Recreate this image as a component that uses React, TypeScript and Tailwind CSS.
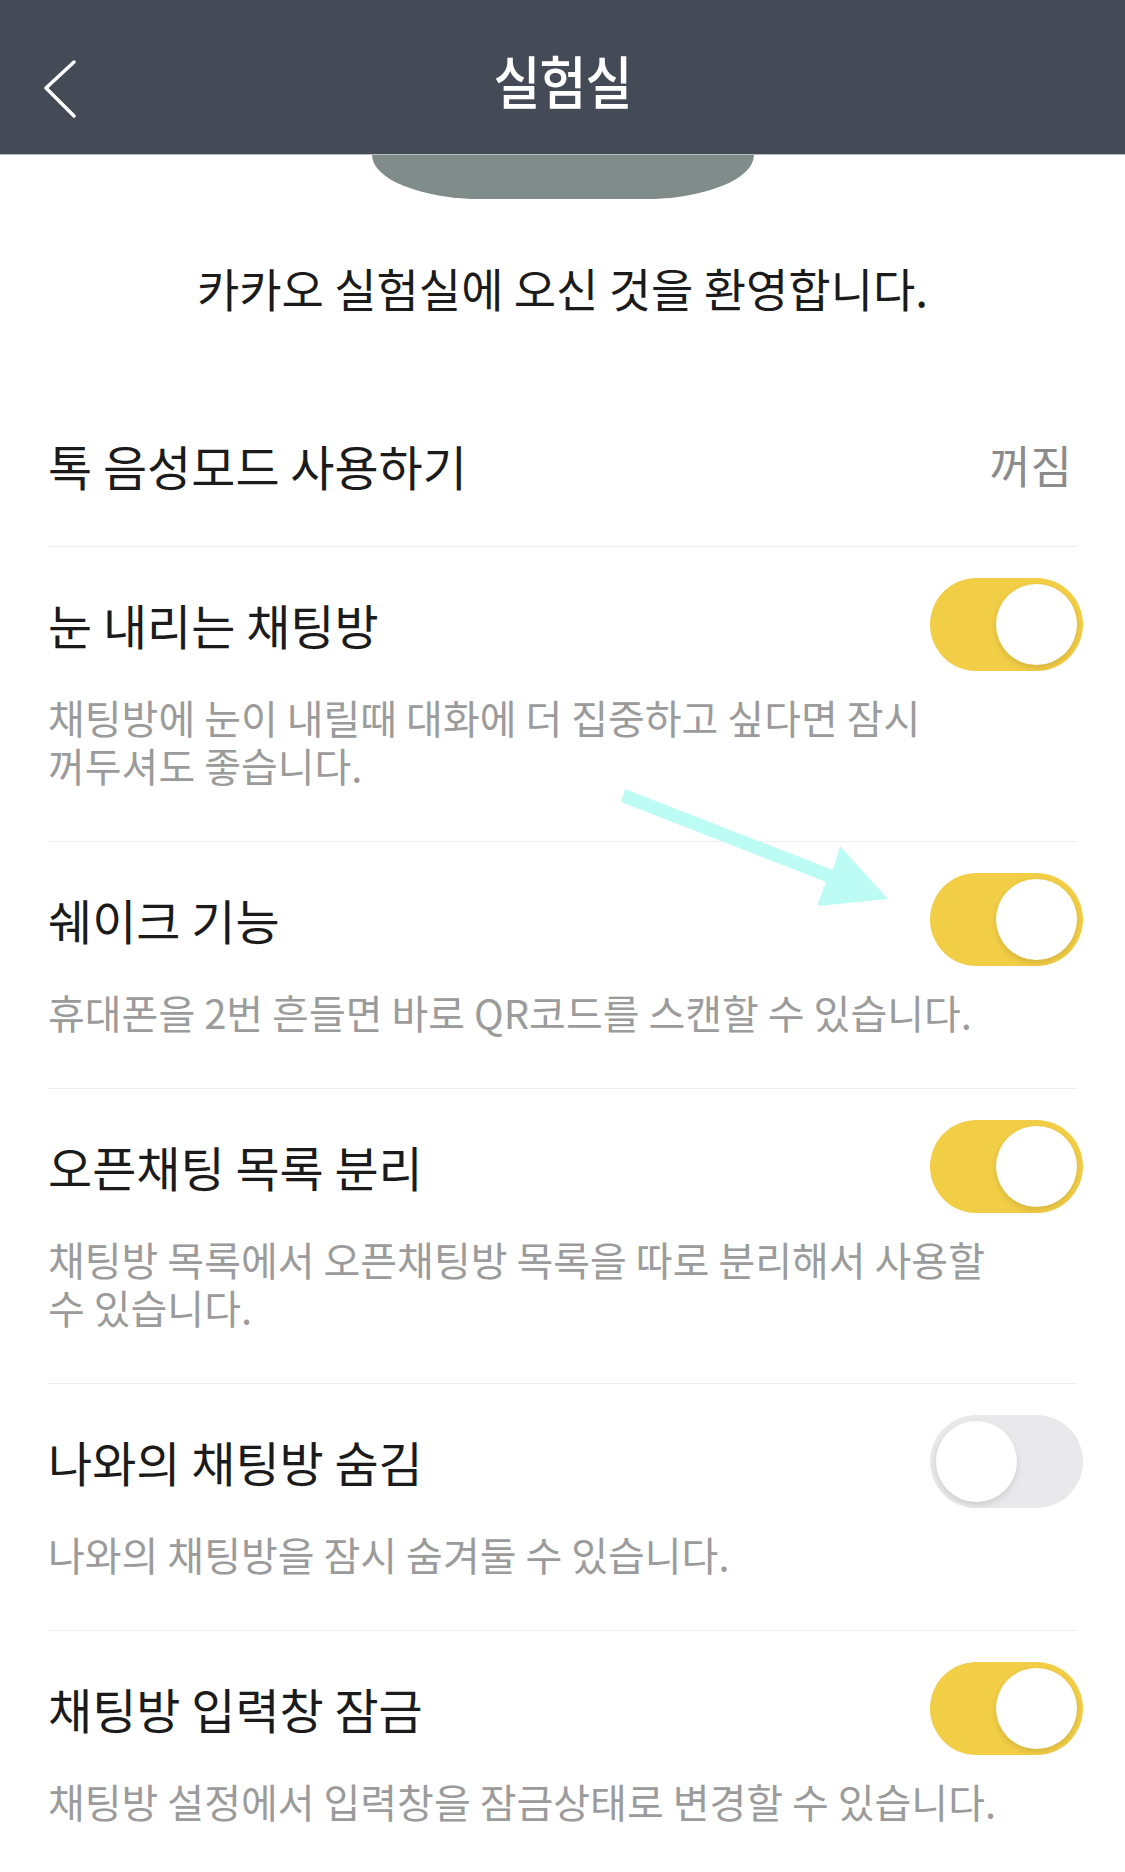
import { Fragment } from 'react'

interface LabRow {
  title: string
  desc?: string[]
  on?: boolean
  value?: string
}

const rows: LabRow[] = [
  { title: '톡 음성모드 사용하기', value: '꺼짐' },
  {
    title: '눈 내리는 채팅방',
    desc: ['채팅방에 눈이 내릴때 대화에 더 집중하고 싶다면 잠시', '꺼두셔도 좋습니다.'],
    on: true,
  },
  { title: '쉐이크 기능', desc: ['휴대폰을 2번 흔들면 바로 QR코드를 스캔할 수 있습니다.'], on: true },
  {
    title: '오픈채팅 목록 분리',
    desc: ['채팅방 목록에서 오픈채팅방 목록을 따로 분리해서 사용할', '수 있습니다.'],
    on: true,
  },
  { title: '나와의 채팅방 숨김', desc: ['나와의 채팅방을 잠시 숨겨둘 수 있습니다.'], on: false },
  { title: '채팅방 입력창 잠금', desc: ['채팅방 설정에서 입력창을 잠금상태로 변경할 수 있습니다.'], on: true },
]

function Toggle({ on }: { on: boolean }) {
  return (
    <div
      className={`-mr-[6px] w-[153px] h-[93px] shrink-0 rounded-full p-[6px] flex ${
        on ? 'bg-[#f2cd46] justify-end' : 'bg-[#e9e9eb] justify-start'
      }`}
    >
      <div className="w-[81px] h-[81px] rounded-full bg-white shadow-[0_3px_6px_rgba(0,0,0,0.12)]" />
    </div>
  )
}

export default function App() {
  return (
    <div
      className="relative w-[1125px] h-[1872px] bg-white overflow-hidden"
      style={{ fontFamily: '"Noto Sans CJK KR", "Noto Sans", sans-serif' }}
    >
      {/* Header */}
      <div className="relative h-[155px] bg-[#444b56] border-b border-[#b9bcc0] flex items-center justify-center">
        <svg
          className="absolute left-[40px] top-[58px] w-[40px] h-[62px]"
          viewBox="0 0 40 62"
          fill="none"
          stroke="white"
          strokeWidth={3.5}
          strokeLinecap="round"
          strokeLinejoin="round"
          aria-hidden="true"
        >
          <path d="M34 4 L6 30 L34 58" />
        </svg>
        <div className="text-white text-[51px] font-medium leading-none scale-y-[1.12] tracking-[-1px] mt-[4px]">실험실</div>
      </div>

      {/* Banner tail */}
      <div className="mx-auto w-[382px] h-[44px] bg-[#7f8c89] rounded-bl-[110px_44px] rounded-br-[110px_44px]" />

      <div className="mt-[63px] text-center text-[46px] leading-[50px] text-[#1b1b1b]">
        카카오 실험실에 오신 것을 환영합니다.
      </div>

      {/* Settings list */}
      <div className="mt-[76px] px-[48px]">
        {rows.map((row, i) => (
          <div
            key={row.title}
            className={`pt-[47px] ${i === 0 ? 'pb-[51px]' : 'pb-[52px]'} ${
              i < rows.length - 1 ? 'border-b border-[#efefef]' : ''
            }`}
          >
            <div className="h-[60px] flex items-center justify-between">
              <span className="text-[48px] leading-[60px] text-[#1b1b1b] whitespace-nowrap">{row.title}</span>
              {row.value ? (
                <span className="text-[45px] text-[#8b8b8b] mr-[5px]">{row.value}</span>
              ) : (
                <Toggle on={!!row.on} />
              )}
            </div>
            {row.desc && (
              <div className="mt-[39px] text-[40px] leading-[48px] text-[#9b9b9b] whitespace-nowrap">
                {row.desc.map((line, j) => (
                  <Fragment key={j}>
                    {j > 0 && <br />}
                    {line}
                  </Fragment>
                ))}
              </div>
            )}
          </div>
        ))}
      </div>

      {/* Annotation arrow */}
      <svg className="absolute inset-0 w-[1125px] h-[1872px] pointer-events-none" viewBox="0 0 1125 1872" aria-hidden="true">
        <polygon
          points="625,789 833,870 840,846 888,899 817,906 826,882 621,802"
          fill="#bdfcf4"
        />
      </svg>
    </div>
  )
}
